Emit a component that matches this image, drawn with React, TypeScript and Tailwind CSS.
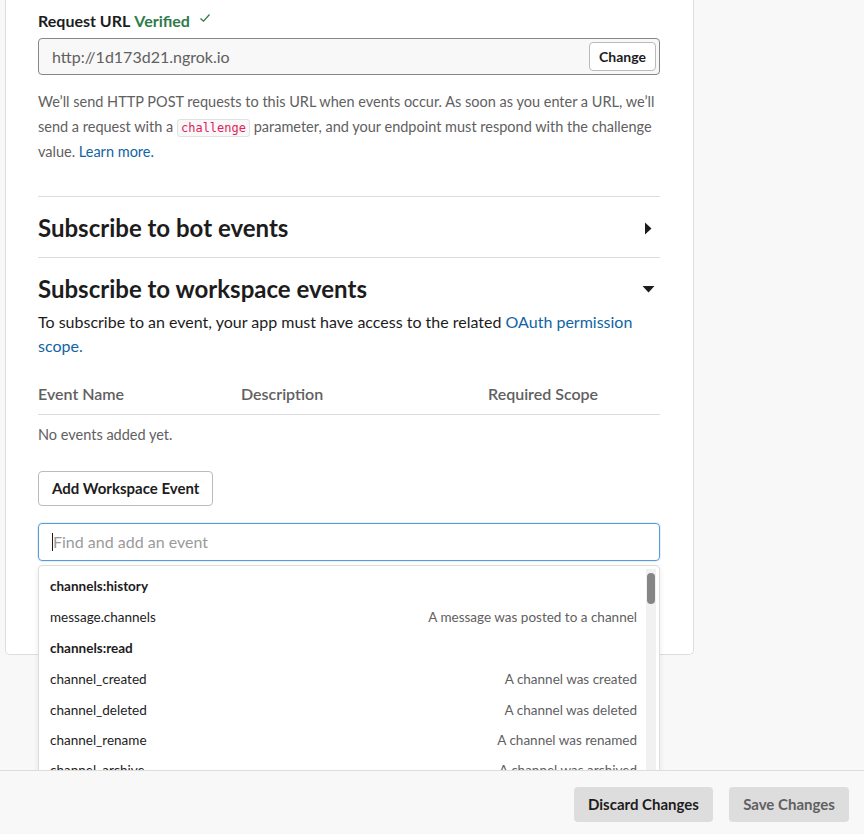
import React from "react";

const events: { group: string; items: [string, string][] }[] = [
  { group: "channels:history", items: [["message.channels", "A message was posted to a channel"]] },
  {
    group: "channels:read",
    items: [
      ["channel_created", "A channel was created"],
      ["channel_deleted", "A channel was deleted"],
      ["channel_rename", "A channel was renamed"],
      ["channel_archive", "A channel was archived"],
      ["channel_unarchive", "A channel was unarchived"],
    ],
  },
];

const TriangleRight = () => (
  <svg width="8" height="13" viewBox="0 0 8 13" className="mr-[8px]">
    <path d="M1 0.5 L7.5 6.5 L1 12.5 Z" fill="#1d1c1d" />
  </svg>
);

const TriangleDown = () => (
  <svg width="13" height="8" viewBox="0 0 13 8" className="mr-[5px]">
    <path d="M0.5 1 L12.5 1 L6.5 7.5 Z" fill="#1d1c1d" />
  </svg>
);

export default function App() {
  return (
    <div className="relative h-[834px] w-[864px] overflow-hidden bg-[#f8f8f8] font-['Lato','Liberation_Sans',sans-serif] text-[#1d1c1d]">
      {/* settings card */}
      <div className="ml-[5px] w-[689px] rounded-b-[5px] border-x border-b border-[#dddddd] bg-white pl-[32px] pr-[33px] pt-[11px] pb-[93px]">
        <div className="flex items-center text-[16px] font-bold leading-[20px]">
          <span>Request URL</span>
          <span className="ml-[4px] text-[#2f7a4b]">Verified</span>
          <svg width="12" height="10" viewBox="0 0 12 10" className="ml-[9px] mb-[6px]">
            <path d="M1.5 5.5 L4.5 8.2 L10.5 1.5" fill="none" stroke="#2f7a4b" strokeWidth="1.3" />
          </svg>
        </div>
        <div className="mt-[7px] flex h-[37px] items-center justify-between rounded-[4px] border border-[#868686] bg-[#f8f8f8] pl-[13px] pr-[3px]">
          <span className="text-[16px] text-[#616061]">http://1d173d21.ngrok.io</span>
          <button className="h-[29px] rounded-[4px] border border-[#bbbbbb] bg-white px-[9px] text-[14px] font-bold">
            Change
          </button>
        </div>
        <p className="mt-[14px] text-[14.5px] leading-[25px] text-[#616061]">
          We’ll send HTTP POST requests to this URL when events occur. As soon as you enter a URL, we’ll send a request with a{" "}
          <code className="rounded-[3px] border border-[#e2e2e2] bg-[#f8f8f8] px-[3px] py-[1px] font-['DejaVu_Sans_Mono',monospace] text-[12px] leading-none text-[#e01e5a]">
            challenge
          </code>{" "}
          parameter, and your endpoint must respond with the challenge value.{" "}
          <a className="text-[#1264a3]">Learn more.</a>
        </p>

        <div className="mt-[32px] flex items-center justify-between border-t border-[#dddddd] pt-[17px] pb-[15px]">
          <h2 className="text-[24px] font-bold leading-[28px]">Subscribe to bot events</h2>
          <TriangleRight />
        </div>

        <div className="border-t border-[#dddddd] pt-[17px]">
          <div className="flex items-center justify-between">
            <h2 className="text-[24px] font-bold leading-[28px]">Subscribe to workspace events</h2>
            <TriangleDown />
          </div>
          <p className="mt-[7px] text-[16px] leading-[24px]">
            To subscribe to an event, your app must have access to the related{" "}
            <a className="text-[#1264a3]">OAuth permission scope.</a>
          </p>

          <div className="mt-[25px] grid grid-cols-[203px_247px_1fr] border-b border-[#dddddd] pb-[9px] text-[16px] font-semibold leading-[22px] text-[#616061]">
            <span>Event Name</span>
            <span>Description</span>
            <span>Required Scope</span>
          </div>
          <div className="mt-[10px] text-[14.5px] leading-[20px] text-[#616061]">No events added yet.</div>

          <button className="mt-[26px] h-[35px] rounded-[4px] border border-[#bbbbbb] bg-white px-[13px] text-[15px] font-bold">
            Add Workspace Event
          </button>

          <div className="relative mt-[17px]">
            <div className="flex h-[38px] items-center rounded-[4px] border border-[#5b9bd5] pl-[13px] shadow-[0_0_0_1px_rgba(91,155,213,0.15)]">
              <span className="h-[18px] w-px bg-[#1d1c1d]" />
              <span className="text-[16px] text-[#9a9a9a]">Find and add an event</span>
            </div>

            {/* event picker */}
            <div className="absolute left-0 top-[42px] z-10 h-[240px] w-full overflow-hidden rounded-[4px] border border-[#dddddd] bg-white pt-[5px] shadow-[0_2px_6px_rgba(0,0,0,0.08)]">
              <div className="pl-[11px] pr-[22px]">
                {events.map((g) => (
                  <div key={g.group}>
                    <div className="flex h-[31px] items-center text-[13.5px] font-bold">{g.group}</div>
                    {g.items.map(([name, desc], i) => (
                      <div
                        key={name}
                        className={`flex items-center justify-between text-[13.5px] ${i === 0 ? "h-[31px]" : "h-[30px]"}`}
                      >
                        <span>{name}</span>
                        <span className="text-[#616061]">{desc}</span>
                      </div>
                    ))}
                  </div>
                ))}
              </div>
              <div className="absolute right-[3px] top-[3px] bottom-0 w-[10px] bg-[#f1f1f1]">
                <div className="mx-auto mt-[4px] h-[31px] w-[8px] rounded-full bg-[#858585]" />
              </div>
            </div>
          </div>
        </div>
      </div>

      {/* footer bar */}
      <div className="absolute bottom-0 left-0 z-20 flex h-[64px] w-full justify-end gap-[16px] border-t border-[#dddddd] bg-[#f8f8f8] pr-[15px] pt-[16px]">
        <button className="h-[35px] w-[139px] rounded-[4px] bg-[#dddddd] text-[15px] font-bold text-[#1d1c1d]">
          Discard Changes
        </button>
        <button className="h-[35px] w-[120px] rounded-[4px] bg-[#dddddd] text-[15px] font-bold text-[#616061]">
          Save Changes
        </button>
      </div>
    </div>
  );
}
